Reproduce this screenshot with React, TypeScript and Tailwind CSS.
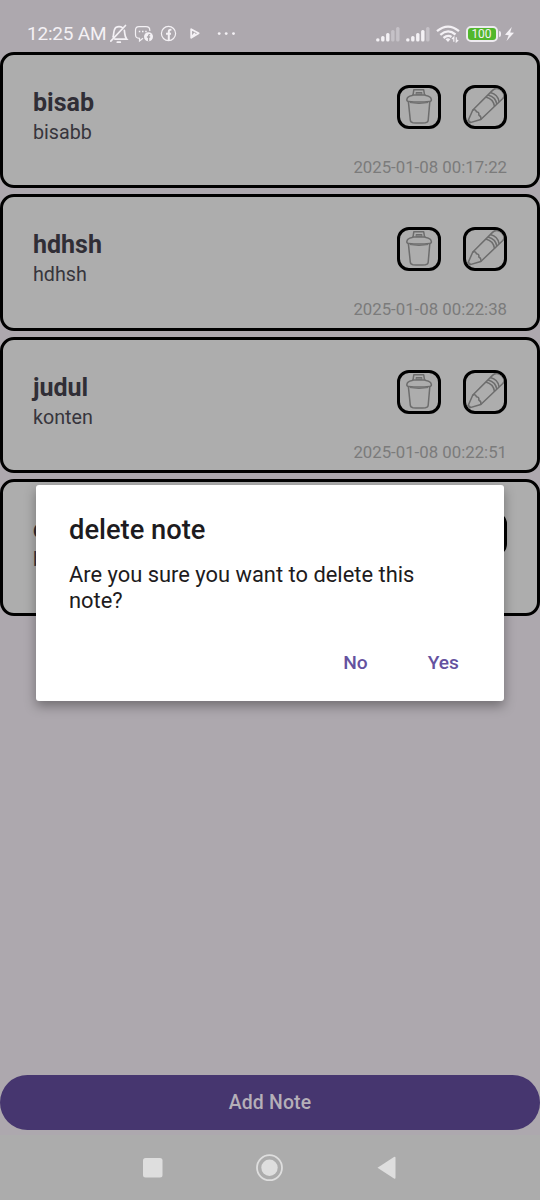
import React from "react";

type Note = { title: string; body: string; date?: string };

const notes: Note[] = [
  { title: "bisab", body: "bisabb", date: "2025-01-08 00:17:22" },
  { title: "hdhsh", body: "hdhsh", date: "2025-01-08 00:22:38" },
  { title: "judul", body: "konten", date: "2025-01-08 00:22:51" },
  { title: "c", body: "b" },
];

function Signal({ active }: { active: number }) {
  return (
    <svg width="24" height="16" viewBox="0 0 24 16" fill="#f4f1f5">
      {[3.2, 5.5, 8.5, 11.5, 14.5].map((h, i) => (
        <rect key={h} x={i * 5 + 0.1} y={15.5 - h} width="3.4" height={h} rx="1.5" opacity={i < active ? 1 : 0.35} />
      ))}
    </svg>
  );
}

function StatusBar() {
  return (
    <header className="flex h-[51.5px] shrink-0 items-center pl-[27px] pr-[26.5px] pt-4 text-[#f4f1f5]">
      <span className="w-[82px] whitespace-nowrap text-[19px] leading-[22px] tracking-[-0.2px]">12:25 AM</span>
      <svg width="20" height="20" viewBox="0 0 20 20" fill="none" stroke="currentColor" strokeWidth="1.7" strokeLinecap="round">
        <path d="M4 12.8C5.2 10.5 4 5.5 7.2 3.3C8.2 2.4 11.8 2.2 13.2 3.5M15.3 6.3C16 9.5 15.4 12.4 17.8 15.2H6M1.8 17.2L16.5 1.5M8.3 18.2H11.3" />
      </svg>
      <svg className="ml-[5px]" width="20" height="18" viewBox="0 0 20 18" fill="none" stroke="currentColor" strokeWidth="1.2">
        <path d="M9 13.3L5.5 16V13.3C2.5 13.3 1.5 12 1.5 9.5V5.5C1.5 3 3 1.7 5 1.7H12C14.5 1.7 15.8 3 15.8 5.2V6" />
        <path d="M4.8 6.6H6.3M8 6.6H9.5M11.2 6.6H12.7" strokeWidth="1.5" />
        <circle cx="14.5" cy="11.7" r="4.5" fill="currentColor" stroke="none" />
        <path d="M14.6 16V11C14.6 9.8 15.2 9.5 16.2 9.6M12.9 12H16.2" stroke="#aaa6ab" strokeWidth="1.3" />
      </svg>
      <svg className="ml-[6px]" width="17" height="17" viewBox="0 0 17 17" fill="none" stroke="currentColor">
        <circle cx="8.5" cy="8.5" r="7.1" strokeWidth="1.2" />
        <path d="M8.8 15V6.8C8.8 5 9.6 4.5 11.4 4.7M6 8.7H11" strokeWidth="2" />
      </svg>
      <svg className="ml-[13px]" width="10" height="11" viewBox="0 0 10 11" fill="none" stroke="currentColor" strokeWidth="1.8" strokeLinejoin="round">
        <path d="M1.2 1.2L8.7 5.2L1.2 9.7ZM1.2 9.7L5 5.2" />
      </svg>
      <svg className="ml-[17px]" width="20" height="4" viewBox="0 0 20 4" fill="currentColor">
        <circle cx="2.2" cy="1.6" r="1.4" /><circle cx="9.2" cy="1.6" r="1.4" /><circle cx="16.5" cy="1.6" r="1.4" />
      </svg>
      <div className="ml-auto flex items-center">
        <Signal active={3} />
        <span className="ml-1.5 flex"><Signal active={4} /></span>
        <svg className="ml-[6px]" width="24" height="18" viewBox="0 0 24 18" fill="none" stroke="currentColor" strokeWidth="2.3">
          <path d="M1 6.2Q12 -3 23 6.2M4.3 9.8Q12 3.2 19.5 9.5M7.5 13Q12 9.2 15.5 12" />
          <path d="M12 17L9.5 14.3Q12 12.4 14.3 14.3Z" fill="currentColor" stroke="none" />
          <path d="M17.8 16.8V12.2L16 14M20.3 12.2V16.8L22.2 15" strokeWidth="1.2" />
        </svg>
        <span className="ml-[6px] flex h-[16px] w-[32px] items-center justify-center rounded-[5px] border-2 border-[#eeeaf0] bg-[#51b72c] pt-px text-[12px] leading-none">100</span>
        <span className="ml-px h-[6px] w-[2px] rounded-r-sm bg-[#eeeaf0]" />
        <svg className="ml-[4px]" width="9" height="14" viewBox="0 0 9 14" fill="currentColor">
          <path d="M6.8 0L0 7.7L3.7 8.2L1.5 14L9 5.8L5.2 5.4Z" />
        </svg>
      </div>
    </header>
  );
}

function TrashIcon() {
  return (
    <svg width="38" height="38" viewBox="0 0 38 38" fill="none" stroke="#6d6d6d" strokeWidth="1.5" strokeLinejoin="round">
      <path d="M13 7.2L13.8 1.8H23.7L24.6 7.2" />
      <path d="M16.2 6.2V4.5H21.8V6.2ZM18 4.5V6.2M20 4.5V6.2" strokeWidth="1.1" />
      <path d="M6.8 11.8Q7.2 8.3 12 7.5L13.2 7H24.8L26 7.5Q31 8.3 31.4 11.8Q31.4 13.4 29.5 13.4Q19 14.8 8.7 13.4Q6.8 13.4 6.8 11.8Z" />
      <path d="M8.4 13.8L10.3 32.2Q10.5 34.3 13 34.7Q19 35.5 25.4 34.7Q28 34.3 28.2 32.2L29.8 13.8" />
      <path d="M10 14.6Q19 16.4 28 14.6" strokeWidth="1" />
    </svg>
  );
}

function PencilIcon() {
  return (
    <svg width="38" height="38" viewBox="0 0 38 38" fill="none" stroke="#6d6d6d" strokeWidth="1.5" strokeLinejoin="round">
      <path d="M.8 35.6L6.8 22L26.5 2.4Q30.5 -1.6 35.5 2.4Q40 6.8 36.8 10.5L14.8 31.5Z" />
      <path d="M6.8 22Q9.5 21 10.4 23.7Q13.4 24 12.8 27Q15.6 28.4 14.8 31.5" />
      <path d="M19.8 9.1Q27.4 11 28.5 18.4M22.1 6.9Q29.7 8.8 30.8 16.2M24.4 4.6Q32 6.5 33.1 13.9" />
      <path d="M2.2 32.4L4.4 34.2" />
    </svg>
  );
}

function IconButton({ label, children }: { label: string; children: React.ReactNode }) {
  return (
    <button aria-label={label} className="flex size-11 items-center justify-center overflow-hidden rounded-[12px] border-3 border-black">
      {children}
    </button>
  );
}

function NoteCard({ note }: { note: Note }) {
  return (
    <article className="flex h-[136.5px] shrink-0 flex-col rounded-[14px] border-3 border-black bg-[#adadad] px-[30px] pt-[30px]">
      <div className="flex h-[72px] justify-between">
        <div className="pt-[3px]">
          <h2 className="text-[25px] font-bold leading-[29px] text-[#302e36]">{note.title}</h2>
          <p className="mt-px text-[19.7px] leading-[30px] text-[#37353c]">{note.body}</p>
        </div>
        <div className="flex gap-[22px]">
          <IconButton label="Delete"><TrashIcon /></IconButton>
          <IconButton label="Edit"><PencilIcon /></IconButton>
        </div>
      </div>
      {note.date && <time className="text-right text-[16.8px] leading-[20px] text-[#7b7b7b]">{note.date}</time>}
    </article>
  );
}

function DeleteDialog() {
  return (
    <div role="dialog" className="absolute left-[36px] top-[485px] flex h-[216px] w-[468px] flex-col rounded-[3px] bg-white px-[33px] pt-[29px] text-[#1d1b20] shadow-[0_5px_12px_rgba(0,0,0,0.35)]">
      <h1 className="text-[27.3px] font-medium leading-[32px]">delete note</h1>
      <p className="mt-[16px] text-[21.9px] leading-[26px]">Are you sure you want to delete this<br />note?</p>
      <div className="mt-[37px] flex justify-end gap-[60px] pr-[12px] text-[19.2px] font-medium leading-[24px] text-[#65529f]">
        <button>No</button>
        <button>Yes</button>
      </div>
    </div>
  );
}

export default function App() {
  return (
    <div className="relative flex h-[1200px] w-[540px] flex-col overflow-hidden bg-[#ada8ae] font-['Roboto',sans-serif]">
      <StatusBar />
      <main className="flex flex-1 flex-col gap-[6px]">
        {notes.map((note) => (
          <NoteCard key={note.title} note={note} />
        ))}
      </main>
      <button className="h-[55px] shrink-0 rounded-full bg-[#46366f] pt-px text-[19.4px] font-medium tracking-[0.2px] text-[#b5afb8]">Add Note</button>
      <nav className="mt-[5.5px] flex h-[65px] shrink-0 items-center bg-[#acacac] pl-[142px]">
        <svg width="255" height="28" viewBox="0 0 255 28" fill="#dedede">
          <rect x="1" y="4" width="19.5" height="19.5" rx="2.5" />
          <circle cx="127.5" cy="13.7" r="12.5" fill="none" stroke="#dedede" strokeWidth="1.8" />
          <circle cx="127.5" cy="13.7" r="8.2" />
          <path d="M235.5 13.7L252 3Q253.5 2.2 253.5 4V23.5Q253.5 25.3 252 24.5Z" />
        </svg>
      </nav>
      <DeleteDialog />
    </div>
  );
}
